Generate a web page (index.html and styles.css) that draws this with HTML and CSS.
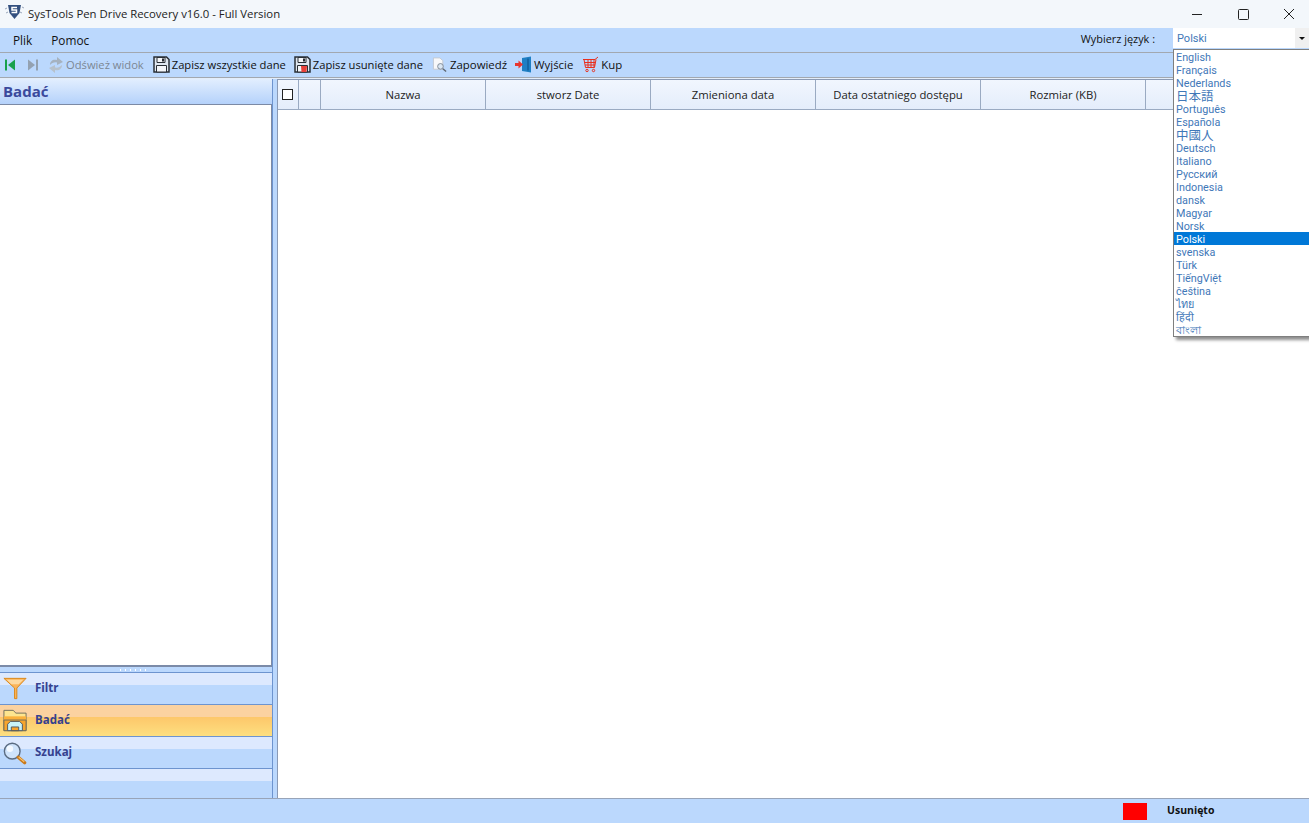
FILE: index.html
```html
<!DOCTYPE html>
<html lang="pl">
<head>
    <meta charset="UTF-8">
    <meta name="viewport" content="width=device-width, initial-scale=1.0">
    <title>SysTools Pen Drive Recovery v16.0 - Full Version</title>
    <link rel="stylesheet" href="styles.css">
</head>
<body>
    <!-- Title bar -->
    <header class="titlebar">
        <svg class="app-logo" width="20" height="16" viewBox="0 0 20 16">
            <path d="M4 1h13l-1.500 8-5 6-5-6z" fill="#33507f"/>
            <path d="M1 5l2-1M18 3l2 1M2 9l2-1M16 8l2 1" stroke="#9aa7bb" stroke-width="1"/>
            <path d="M13 3.500H8v2.500h4.500v2.500H7.500" fill="none" stroke="#fff" stroke-width="1.500"/>
        </svg>
        <span class="app-title">SysTools Pen Drive Recovery v16.0 - Full Version</span>
        <div class="window-buttons">
            <svg width="46" height="24" viewBox="0 0 46 24"><path d="M21 12.500h10" stroke="#222"/></svg>
            <svg width="46" height="24" viewBox="0 0 46 24"><rect x="21.500" y="7.500" width="10" height="10" rx="1" fill="none" stroke="#222"/></svg>
            <svg width="46" height="24" viewBox="0 0 46 24"><path d="M21 7l10 10M31 7L21 17" stroke="#222"/></svg>
        </div>
    </header>

    <!-- Menu -->
    <nav class="menubar">
        <span class="menu-item">Plik</span>
        <span class="menu-item">Pomoc</span>
        <span class="lang-label">Wybierz język :</span>
        <div class="lang-combo">
            <span class="lang-value">Polski</span>
            <span class="lang-arrow"></span>
        </div>
    </nav>

    <!-- Toolbar -->
    <div class="toolbar">
        <svg class="tool-first" width="12" height="14" viewBox="0 0 12 14">
            <path d="M1 1.500h2v11H1z" fill="#19a04b"/><path d="M11 1.500v11L4 7z" fill="#19a04b"/>
        </svg>
        <svg class="tool-last" width="12" height="14" viewBox="0 0 12 14">
            <path d="M1 1.500v11L8 7z" fill="#93a1b1"/><path d="M9 1.500h2v11H9z" fill="#93a1b1"/>
        </svg>
        <button class="tool disabled tool-refresh">
            <svg width="16" height="18" viewBox="0 0 16 18">
                <path d="M2 9c0-4 3-6 7-5V1l6 5-6 3V6.500C6 6 4 7 2 9z" fill="#a6b2bf"/>
                <path d="M14 9c0 4-3 6-7 5v3l-6-5 6-3v2.500c3 .5 5-.5 7-2.500z" fill="#b7c1cb"/>
            </svg>
            Odśwież widok
        </button>
        <button class="tool tool-saveall">
            <svg width="17" height="17" viewBox="0 0 17 17">
                <path d="M1 1h12.500L16 3.500V16H1z" fill="#dfe7f0" stroke="#2a2f36" stroke-width="1.500"/>
                <path d="M4 1.500h8v5H4z" fill="#f4f6f9" stroke="#2a2f36"/>
                <path d="M9 2.500h2v3H9z" fill="#2a2f36"/>
                <path d="M3.500 9.500h10V16h-10z" fill="#f4f6f9" stroke="#2a2f36"/>
            </svg>
            Zapisz wszystkie dane
        </button>
        <button class="tool">
            <svg width="17" height="17" viewBox="0 0 17 17">
                <path d="M1 1h12.500L16 3.500V16H1z" fill="#dfe7f0" stroke="#2a2f36" stroke-width="1.500"/>
                <path d="M4 1.500h8v5H4z" fill="#f4f6f9" stroke="#2a2f36"/>
                <path d="M9 2.500h2v3H9z" fill="#2a2f36"/>
                <path d="M3.500 9.500h10V16h-10z" fill="#f4f6f9" stroke="#2a2f36"/>
                <path d="M7 10h6l-.5 6h-5z" fill="#e8413a"/>
            </svg>
            Zapisz usunięte dane
        </button>
        <button class="tool tool-preview">
            <svg width="16" height="17" viewBox="0 0 17 17">
                <path d="M1.500 1.500h7l3 3v9h-10z" fill="#f7f8fa" stroke="#c3c9d1"/>
                <circle cx="9" cy="10.500" r="3" fill="#dbe7f3" stroke="#7d8894"/>
                <path d="M11.500 13l3.500 3" stroke="#5f6873" stroke-width="1.500"/>
            </svg>
            Zapowiedź
        </button>
        <button class="tool tool-exit">
            <svg width="17" height="17" viewBox="0 0 17 17">
                <path d="M7 2l9-1.500v16L7 15z" fill="#1f7fc4"/>
                <path d="M13 2.500v12" stroke="#0d4f86"/>
                <path d="M0 7h3.500V4.500L8 8.500l-4.500 4V10H0z" fill="#e8352e"/>
            </svg>
            Wyjście
        </button>
        <button class="tool tool-buy">
            <svg width="17" height="17" viewBox="0 0 17 17" fill="none" stroke="#e8301f">
                <path d="M1 3.500h12l3-2.500"/>
                <path d="M2 3.500l1.500 8h9l1.500-8"/>
                <path d="M2.500 6.500h11M3 9h10M6 3.500v8M9 3.500v8M12 3.500v8"/>
                <circle cx="5" cy="14.500" r="1.200"/><circle cx="11.500" cy="14.500" r="1.200"/>
            </svg>
            Kup
        </button>
    </div>

    <div class="workspace">
        <!-- Left panel -->
        <aside class="side">
            <h2 class="side-title">Badać</h2>
            <div class="tree"></div>
            <div class="splitter"><span class="grip"></span></div>
            <div class="nav-item">
                <svg width="24" height="23" viewBox="0 0 26 24">
                    <path d="M1 1h24L15 11.500V23h-2.500V11.500z" fill="#fbb45a" stroke="#d98412"/>
                    <path d="M4 2.500h18l-5 5H9z" fill="#fdd9a0"/>
                </svg>
                <span>Filtr</span>
            </div>
            <div class="nav-item active">
                <svg width="24" height="23" viewBox="0 0 26 24">
                    <path d="M1 23V1h10l3 3h11v19z" fill="#fde58f" stroke="#6d6a5a"/>
                    <path d="M1 7.500h24v4H1z" fill="#fbb13c"/>
                    <path d="M1 11.500h24V23H1z" fill="#f7a52d" stroke="#6d6a5a"/>
                    <path d="M5 23v-7l3-3h10l3 3v7z" fill="#c8f3fa" stroke="#4a5560"/>
                    <path d="M9 23v-4h8v4z" fill="#f7a52d" stroke="#4a5560"/>
                </svg>
                <span>Badać</span>
            </div>
            <div class="nav-item">
                <svg width="24" height="24" viewBox="0 0 26 24">
                    <circle cx="10" cy="10" r="8.500" fill="#cfe3fa" stroke="#5b6b80" stroke-width="1.500"/>
                    <circle cx="7.500" cy="7.500" r="3.500" fill="#f4f9ff"/>
                    <path d="M16.500 16.500l7 6" stroke="#c9791b" stroke-width="3.500" stroke-linecap="round"/>
                    <path d="M17 16.500l6 5" stroke="#fbc56e" stroke-width="1.200"/>
                </svg>
                <span>Szukaj</span>
            </div>
            <div class="nav-item nav-empty"></div>
        </aside>

        <!-- File list -->
        <main class="files">
            <div class="file-head">
                <div class="col col-check"><span class="check-box"></span></div>
                <div class="col col-flag"></div>
                <div class="col col-data">Nazwa</div>
                <div class="col col-data">stworz Date</div>
                <div class="col col-data">Zmieniona data</div>
                <div class="col col-data">Data ostatniego dostępu</div>
                <div class="col col-data">Rozmiar (KB)</div>
                <div class="col col-rest"></div>
            </div>
        </main>
    </div>

    <footer class="statusbar">
        <span class="legend-box"></span>
        <span class="legend-text">Usunięto</span>
    </footer>

    <!-- Opened language list -->
    <ul class="lang-list">
        <li>English</li>
        <li>Français</li>
        <li>Nederlands</li>
        <li class="cjk">日本語</li>
        <li>Português</li>
        <li>Española</li>
        <li class="cjk">中國人</li>
        <li>Deutsch</li>
        <li>Italiano</li>
        <li>Русский</li>
        <li>Indonesia</li>
        <li>dansk</li>
        <li>Magyar</li>
        <li>Norsk</li>
        <li class="selected">Polski</li>
        <li>svenska</li>
        <li>Türk</li>
        <li>TiếngViệt</li>
        <li>čeština</li>
        <li>ไทย</li>
        <li>हिंदी</li>
        <li>বাংলা</li>
    </ul>
</body>
</html>
```

FILE: styles.css
```css
html,
body {
    height: 100%;
}

body {
    margin: 0;
    display: flex;
    flex-direction: column;
    overflow: hidden;
    position: relative;
    font-family: 'Open Sans', 'Noto Sans', sans-serif;
    font-size: 12px;
    color: #111;
    background-color: #bbd8fd;
}

/* Title bar */
.titlebar {
    height: 28px;
    display: flex;
    align-items: center;
    background-color: #f3f7fb;
    flex: none;
}

.app-logo {
    margin: -4px 2px 0 4px;
}

.app-title {
    margin: 0 0 2px 2px;
    font-size: 11.35px;
    color: #222;
}

.window-buttons {
    margin-left: auto;
    display: flex;
    align-items: center;
}

/* Menu */
.menubar {
    height: 24px;
    display: flex;
    align-items: center;
    flex: none;
    border-bottom: 1px solid #a2a8b0;
    padding-left: 13px;
}

.menu-item {
    margin-right: 19px;
    font-size: 11.8px;
}

.lang-label {
    margin-left: auto;
    margin-right: 18px;
    font-size: 10.9px;
    margin-bottom: 3px;
}

.lang-combo {
    width: 136px;
    height: 20px;
    margin-bottom: 4px;
    display: flex;
    align-items: center;
    justify-content: space-between;
    background-color: #fff;
}

.lang-value {
    margin-left: 4px;
    font-family: Roboto, sans-serif;
    font-size: 11px;
    color: #3f78b8;
}

.lang-arrow {
    width: 14px;
    height: 20px;
    background-color: #f0f0f0;
    position: relative;
}

.lang-arrow::after {
    content: "";
    position: absolute;
    left: 4px;
    top: 9px;
    border-left: 3px solid transparent;
    border-right: 3px solid transparent;
    border-top: 3px solid #111;
}

/* Toolbar */
.toolbar {
    height: 25px;
    box-sizing: border-box;
    display: flex;
    align-items: center;
    flex: none;
    padding: 0 0 1px 4px;
    border-bottom: 1px solid #a2a8b0;
    box-shadow: 0 1px 0 #e3edfa;
}

.tool-last {
    margin-left: 11px;
}

.tool {
    display: flex;
    align-items: center;
    gap: 2px;
    padding: 0;
    border: none;
    background: none;
    font-family: inherit;
    font-size: 11.2px;
    color: #111;
    margin-left: 8px;
}

.tool-refresh,
.tool-saveall {
    margin-left: 9px;
}

.tool-preview,
.tool-exit,
.tool-buy {
    font-size: 11.4px;
}

.tool-preview,
.tool-buy {
    margin-left: 9px;
}

.tool.disabled {
    color: #7b8793;
}

/* Workspace */
.workspace {
    flex: 1;
    display: flex;
    min-height: 0;
    padding-top: 1px;
}

.side {
    width: 272px;
    display: flex;
    flex-direction: column;
    border-right: 1px solid #6d94cf;
}

.side-title {
    height: 25px;
    margin: 0;
    padding-left: 3px;
    box-sizing: border-box;
    font-size: 15px;
    line-height: 25px;
    font-weight: 700;
    color: #3b4a9c;
    background: linear-gradient(#e2eefe, #b5d2fb);
}

.tree {
    flex: 1;
    background-color: #fff;
    border-top: 1px solid #7c8aa5;
    border-bottom: 2px solid #7b8ba8;
    border-right: 1px solid #7c8aa5;
}

.splitter {
    height: 5px;
    flex: none;
    display: flex;
    justify-content: center;
    align-items: center;
    padding-right: 9px;
    box-sizing: border-box;
}

.grip {
    width: 28px;
    height: 2px;
    background-image: radial-gradient(circle, #fff 1px, transparent 1px);
    background-size: 5px 2px;
}

.nav-item {
    height: 32px;
    box-sizing: border-box;
    flex: none;
    display: flex;
    align-items: center;
    gap: 8px;
    padding-left: 3px;
    border-top: 1px solid #6d94cf;
    font-size: 11.5px;
    font-weight: 700;
    color: #35418f;
    background: linear-gradient(#dde9fe 12px, #bbd8fd 12px);
}

.nav-item svg {
    flex: none;
}

.nav-item span {
    margin-bottom: 2px;
}

.nav-item.active {
    background: linear-gradient(#fbd2a0 12px, #fdc76a 12px, #fddf80);
}

.nav-empty {
    height: 30px;
}

/* File list */
.files {
    flex: 1;
    margin-left: 4px;
    background-color: #fff;
    border-left: 1px solid #8a9ab5;
    border-top: 1px solid #8a9ab5;
}

.file-head {
    height: 30px;
    box-sizing: border-box;
    display: flex;
    background: linear-gradient(#f1f6fe, #e4edfb);
    border-bottom: 1px solid #9aaac2;
}

.col {
    flex: none;
    box-sizing: border-box;
    display: flex;
    align-items: center;
    justify-content: center;
    border-right: 1px solid #9aaac2;
    font-size: 11.3px;
    color: #222;
}

.col-check {
    width: 21px;
}

.col-flag {
    width: 22px;
}

.col-data {
    width: 165px;
}

.col-rest {
    flex: 1;
    border-right: none;
}

.check-box {
    width: 9px;
    height: 9px;
    margin-right: 1px;
    border: 1px solid #222;
    background-color: #fff;
}

/* Status bar */
.statusbar {
    height: 25px;
    flex: none;
    box-sizing: border-box;
    display: flex;
    align-items: center;
    border-top: 1px solid #98a4b8;
    padding-left: 1123px;
}

.legend-box {
    width: 24px;
    height: 17px;
    background-color: #ff0000;
}

.legend-text {
    margin: 0 0 3px 20px;
    font-size: 10.5px;
    font-weight: 700;
}

/* Language dropdown, lies over the page */
.lang-list {
    position: absolute;
    left: 1173px;
    top: 49px;
    width: 136px;
    height: 288px;
    margin: 0;
    padding: 0;
    box-sizing: border-box;
    list-style: none;
    background-color: #fff;
    border: 1px solid #7f7f7f;
    border-right: none;
    box-shadow: 3px 3px 3px rgba(0, 0, 0, 0.45);
    font-family: Roboto, 'Noto Sans CJK JP', sans-serif;
    font-size: 10.8px;
    color: #3f78b8;
}

.lang-list li {
    height: 13px;
    line-height: 15px;
    padding-left: 2px;
    white-space: nowrap;
}

.lang-list .cjk {
    font-size: 12.5px;
}

.lang-list .selected {
    background-color: #0078d7;
    color: #fff;
}
```
